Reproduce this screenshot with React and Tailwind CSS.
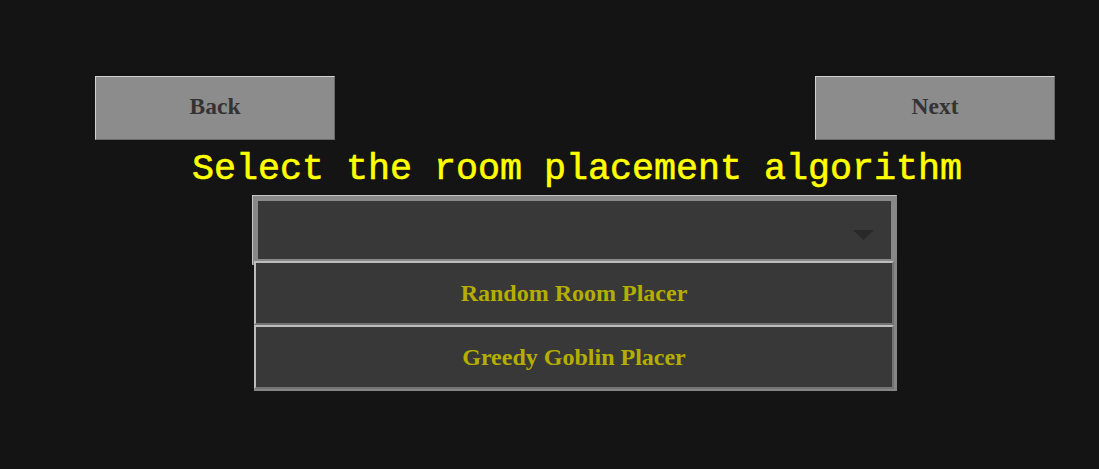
import React from 'react';

const OPTIONS = ['Random Room Placer', 'Greedy Goblin Placer'];

const serif = { fontFamily: '"Liberation Serif", "Times New Roman", serif' };

const NavButton = ({ label }) => (
  <button
    className="w-[240px] h-[64px] bg-[#8c8c8c] border border-t-[#d2d2d2] border-l-[#d2d2d2] border-r-[#6a6a6a] border-b-[#6a6a6a] text-[#333333] text-[23.5px] font-bold flex items-center justify-center pb-[2px]"
    style={serif}
  >
    {label}
  </button>
);

export default function App() {
  return (
    <div className="min-h-screen h-[469px] bg-[#141414] overflow-hidden">
      <div className="w-[960px] ml-[95px] pt-[76px]">
        {/* Barra de navegacion */}
        <div className="flex justify-between">
          <NavButton label="Back" />
          <NavButton label="Next" />
        </div>

        {/* Titulo */}
        <h1
          className="h-[55px] leading-[59px] pl-[4px] text-center text-[36.67px] font-normal text-[#ffff00] whitespace-nowrap"
          style={{ fontFamily: '"Liberation Mono", "Courier New", monospace', WebkitTextStroke: '0.6px #ffff00' }}
        >
          Select the room placement algorithm
        </h1>

        {/* Select */}
        <div className="ml-[157px] w-[645px] h-[70px] border border-t-[#c6c6c6] border-l-[#c6c6c6] border-r-[#888888] border-b-[#888888]">
          <div className="h-full border-[5px] border-[#888888] bg-[#383838] flex items-center justify-end pr-[17px]">
            <svg width="21" height="10" viewBox="0 0 21 10" className="mt-[10px]">
              <path d="M0 0 H21 L10.5 10 Z" fill="#292929" />
            </svg>
          </div>
        </div>

        {/* Lista de opciones */}
        <div className="-mt-[4px] ml-[159px] w-[643px] border-r-[3px] border-b-[2px] border-[#858585]">
          {OPTIONS.map((opt) => (
            <div
              key={opt}
              className="h-[64px] bg-[#383838] border-2 border-t-[#bdbdbd] border-l-[#bdbdbd] border-r-[#727272] border-b-[#727272] flex items-center justify-center text-[#b5ae00] text-[24px] font-bold"
              style={serif}
            >
              {opt}
            </div>
          ))}
        </div>
      </div>
    </div>
  );
}
